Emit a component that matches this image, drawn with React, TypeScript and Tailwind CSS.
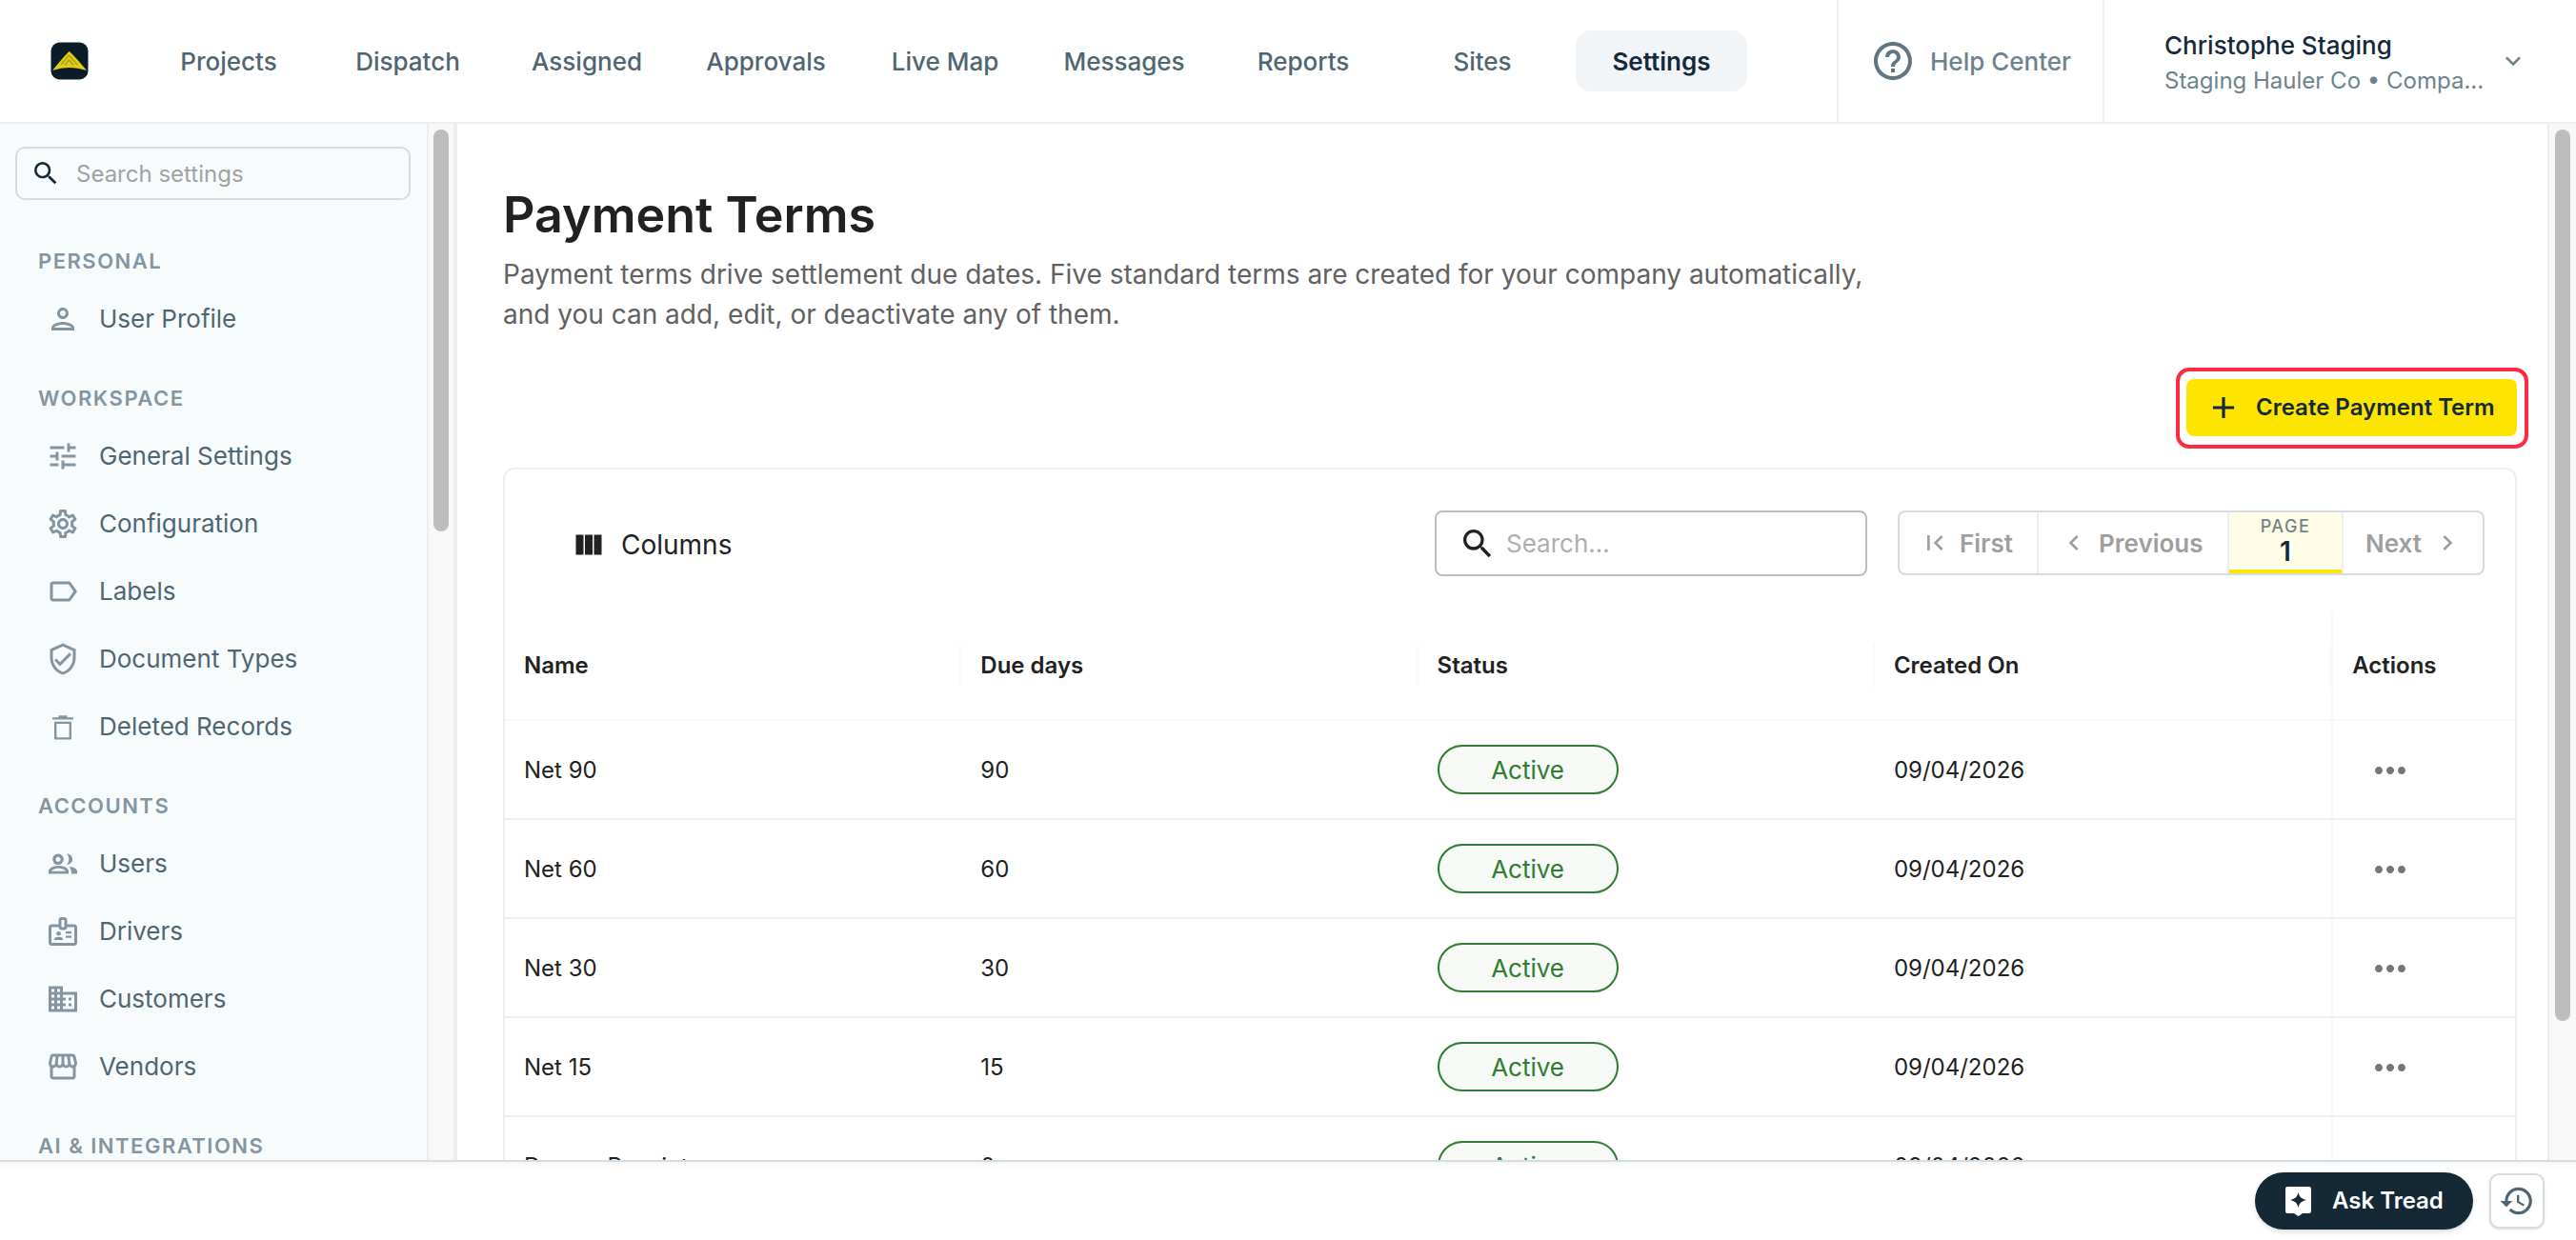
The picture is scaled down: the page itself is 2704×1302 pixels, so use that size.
import React from "react";
import {
  MdSearch, MdOutlinePerson, MdOutlineTune, MdOutlineSettings, MdOutlineLabel, MdOutlineVerifiedUser,
  MdOutlineBadge, MdOutlineDomain, MdOutlineStorefront, MdHelpOutline, MdExpandMore,
  MdAdd, MdViewColumn, MdFirstPage, MdChevronLeft, MdChevronRight, MdMoreHoriz, MdHistory,
} from "react-icons/md";

const nav = ["Projects", "Dispatch", "Assigned", "Approvals", "Live Map", "Messages", "Reports", "Sites", "Settings"];

function TrashIcon({ size, className }: { size: number; className?: string }) {
  return (
    <svg width={size} height={size} viewBox="0 0 24 24" className={className} fill="currentColor">
      <path d="M4.700 5.500h14.600V7H4.700zM9 4.200h6v1.300H9z" />
      <path fillRule="evenodd" d="M6.500 8.500h11a.5.5 0 0 1 .5.5v11.500a.5.5 0 0 1-.5.5h-11a.5.5 0 0 1-.5-.5V9a.5.5 0 0 1 .5-.5zM7.600 10v9.500h8.800V10z" />
    </svg>
  );
}

function UsersIcon({ size, className }: { size: number; className?: string }) {
  return (
    <svg width={size} height={size} viewBox="0 0 36 36" className={className} fill="currentColor">
      <path fillRule="evenodd" d="M13 7.500a5.800 5.800 0 1 1 0 11.600 5.800 5.800 0 0 1 0-11.600zm0 3.300a2.500 2.500 0 1 0 0 5 2.500 2.500 0 0 0 0-5z" />
      <path d="M22 7.600c3.300 0 6 2.400 6 5.700s-2.700 5.700-6 5.700c1.500-1.500 2.300-3.500 2.300-5.700S23.500 9.100 22 7.600z" />
      <path fillRule="evenodd" d="M3 28.500v-2.700c0-3.500 5.200-5.800 10.500-5.800S24 22.300 24 25.800v2.700zm3.200-2.800h14.600c-.6-1.500-3.700-2.900-7.300-2.900s-6.700 1.400-7.300 2.900z" />
      <path d="M25 21c4.300.5 8 2.200 8 5v2.500h-6c0-3-.6-5.500-2-7.500z" />
    </svg>
  );
}

const sections = [
  { title: "PERSONAL", items: [{ label: "User Profile", Icon: MdOutlinePerson as any }] },
  {
    title: "WORKSPACE",
    items: [
      { label: "General Settings", Icon: MdOutlineTune as any },
      { label: "Configuration", Icon: MdOutlineSettings as any },
      { label: "Labels", Icon: MdOutlineLabel as any },
      { label: "Document Types", Icon: MdOutlineVerifiedUser as any },
      { label: "Deleted Records", Icon: TrashIcon as any },
    ],
  },
  {
    title: "ACCOUNTS",
    items: [
      { label: "Users", Icon: UsersIcon as any },
      { label: "Drivers", Icon: MdOutlineBadge as any },
      { label: "Customers", Icon: MdOutlineDomain as any },
      { label: "Vendors", Icon: MdOutlineStorefront as any },
    ],
  },
  { title: "AI & INTEGRATIONS", items: [] as { label: string; Icon: any }[] },
];

const rows = [
  ["Net 90", "90"],
  ["Net 60", "60"],
  ["Net 30", "30"],
  ["Net 15", "15"],
  ["Due on Receipt", "0"],
];

function Logo() {
  return (
    <svg width="40" height="40" viewBox="0 0 40 40" className="shrink-0">
      <rect x="0.5" y="0.5" width="39" height="39" rx="9" fill="#0b1c29" />
      <path d="M19.500 10 Q22 11 38 30 Q28 27 19.500 27 Q11 27 2 30 Q16 13 19.500 10 Z" fill="#e0cd14" />
      <path d="M19.500 14 L28 24 M19.500 14 L11 24 M19.500 19 L24 24.500 M19.500 19 L15 24.500" stroke="#a89a1e" strokeWidth="1.200" fill="none" />
    </svg>
  );
}

function Thumb({ h }: { h: string }) {
  return <div className={`w-4 rounded-full bg-[#bdbdbd] mt-[6px] mx-auto ${h}`} />;
}

export default function App() {
  return (
    <div className="h-[1302px] w-[2704px] overflow-hidden flex flex-col bg-white font-['Inter',sans-serif]">
      {/* Header */}
      <header className="h-[130px] shrink-0 flex items-stretch border-b-2 border-[#eceef1] pl-[53px]">
        <div className="flex items-center">
          <Logo />
        </div>
        <nav className="flex items-center gap-2 ml-[57px]">
          {nav.map((n) => (
            <div
              key={n}
              className={
                n === "Settings"
                  ? "w-[180px] h-16 flex items-center justify-center rounded-2xl bg-[#f1f5f8] text-[26px] font-semibold text-[#15293a]"
                  : "w-[180px] h-16 flex items-center justify-center text-[26px] font-medium text-[#4f6672]"
              }
            >
              {n}
            </div>
          ))}
        </nav>
        <div className="ml-[94px] w-[279px] border-l-2 border-[#eceef1] flex items-center pl-[33px] gap-[15px]">
          <MdHelpOutline size={48} className="text-[#5f7682] shrink-0" />
          <span className="text-[26px] font-medium text-[#6e828d] whitespace-nowrap">Help Center</span>
        </div>
        <div className="flex-1 border-l-2 border-[#eceef1] flex items-center pl-[63px]">
          <div className="w-[338px] pt-[3px]">
            <div className="text-[26px] leading-[38px] font-medium text-[#15293a] whitespace-nowrap">Christophe Staging</div>
            <div className="text-[24px] leading-[36px] text-[#6e828d] whitespace-nowrap">Staging Hauler Co • Compa...</div>
          </div>
          <MdExpandMore size={32} className="text-[#6e828d] ml-[12px]" />
        </div>
      </header>

      {/* Body */}
      <div className="flex-1 min-h-0 flex">
        <aside className="w-[448px] shrink-0 bg-[#f8fbfc] overflow-hidden">
          <div className="mt-6 ml-4 w-[415px] h-14 rounded-[10px] border-2 border-[#d5dce0] flex items-center pl-[14px] gap-4">
            <MdSearch size={32} className="text-[#15293a]" />
            <span className="text-[24px] pt-[2px] text-[#9ea3a6]">Search settings</span>
          </div>
          <div className="mt-12 flex flex-col gap-8">
            {sections.map((s) => (
              <section key={s.title}>
                <div className="h-8 mb-[9px] pl-10 flex items-center text-[22px] font-semibold tracking-[1.5px] text-[#84959f]">{s.title}</div>
                {s.items.map(({ label, Icon }) => (
                  <div key={label} className="h-[71px] flex items-center pl-12 gap-5">
                    <Icon size={36} className="text-[#84959f] shrink-0" />
                    <span className="text-[26px] text-[#4f6672]">{label}</span>
                  </div>
                ))}
              </section>
            ))}
          </div>
        </aside>
        <div className="w-7 shrink-0 border-l-2 border-[#eceef1] bg-[#f8f8f8]">
          <Thumb h="h-[422px]" />
        </div>

        <main className="flex-1 min-w-0 border-l-4 border-[#eceef1] pl-12 pr-8 overflow-hidden">
          <h1 className="mt-[62px] text-[52px] leading-[68px] font-semibold text-[#212121]">Payment Terms</h1>
          <p className="mt-[7px] max-w-[1440px] text-[28px] leading-[42px] text-[#616161]">
            Payment terms drive settlement due dates. Five standard terms are created for your company automatically, and you can add, edit, or deactivate any of them.
          </p>
          <div className="mt-[47px] flex justify-end">
            <button className="relative w-[347px] h-[60px] rounded-lg bg-[#fde500] flex items-center pl-5 gap-[15px] text-[24px] font-semibold text-[#15293a]">
              <MdAdd size={38} className="shrink-0" />
              <span className="whitespace-nowrap">Create Payment Term</span>
              <span className="absolute -left-[11px] -right-[12px] -top-3 -bottom-[13px] rounded-[14px] border-4 border-[#fb2c40]" />
            </button>
          </div>

          <div className="mt-[33px] rounded-t-xl border-2 border-b-0 border-[#eceef1]">
            <div className="h-[150px] pt-[43px] flex items-start">
              <div className="ml-[70px] h-[72px] flex items-center gap-4 text-[28px] text-[#212121]">
                <MdViewColumn size={36} />
                <span>Columns</span>
              </div>
              <div className="ml-auto w-[454px] h-[69px] rounded-lg border-2 border-[#bdbdbd] flex items-center pl-[23px] gap-[10px]">
                <MdSearch size={40} className="text-[#212121]" />
                <span className="text-[26px] text-[#aeaeae]">Search...</span>
              </div>
              <div className="ml-8 mr-[32px] w-[616px] h-[68px] rounded-lg border-2 border-[#d5dce0] flex items-stretch text-[26px] font-semibold text-[#9e9e9e]">
                <div className="w-[146px] border-r-2 border-[#eceef1] flex items-center pl-[21px] gap-[10px]">
                  <MdFirstPage size={32} />
                  <span>First</span>
                </div>
                <div className="w-[200px] border-r-2 border-[#eceef1] flex items-center pl-[21px] gap-[10px]">
                  <MdChevronLeft size={32} />
                  <span>Previous</span>
                </div>
                <div className="w-[118px] bg-[#fffde7] border-b-4 border-[#fde500] flex flex-col items-center">
                  <span className="mt-[3px] text-[18px] leading-[24px] font-medium tracking-[1.5px] text-[#72838c]">PAGE</span>
                  <span className="text-[28px] leading-[28px] font-semibold text-[#15293a]">1</span>
                </div>
                <div className="flex-1 border-l-2 border-[#eceef1] flex items-center pl-[23px] gap-[11px]">
                  <span>Next</span>
                  <MdChevronRight size={32} />
                </div>
              </div>
            </div>

            <div className="grid grid-cols-[479.3px_479.3px_479.3px_479.3px_1fr] h-[114px] border-b-2 border-[#f8f8f8] items-center text-[24px] font-semibold text-[#212121]">
              {["Name", "Due days", "Status", "Created On"].map((h) => (
                <div key={h} className="h-[46px] pl-5 flex items-center border-r-2 border-[#fafafa]">{h}</div>
              ))}
              <div className="h-full pl-5 flex items-center border-l-2 border-[#f8f8f8]">Actions</div>
            </div>

            {rows.map(([name, due]) => (
              <div key={name} className="grid grid-cols-[479.3px_479.3px_479.3px_479.3px_1fr] h-[104px] border-b-2 border-[#eceef1] items-center text-[24px] text-[#212121]">
                <div className="pl-5 pt-[2px] whitespace-nowrap">{name}</div>
                <div className="pl-5 pt-[2px]">{due}</div>
                <div className="pl-5">
                  <span className="w-[190px] h-[52px] rounded-full border-2 border-[#2e7d32] bg-[#f6f9f6] flex items-center justify-center text-[26px] text-[#2e7d32]">Active</span>
                </div>
                <div className="pl-5 pt-[2px]">09/04/2026</div>
                <div className="h-full pl-[36px] pt-[2px] flex items-center border-l-2 border-[#f8f8f8]">
                  <MdMoreHoriz size={48} className="text-[#757575]" />
                </div>
              </div>
            ))}
          </div>
        </main>

        <div className="w-[30px] shrink-0 border-l-2 border-[#eceef1] bg-[#f8f8f8]">
          <Thumb h="h-[936px]" />
        </div>
      </div>

      {/* Bottom bar */}
      <footer className="h-[84px] shrink-0 border-t-2 border-[#d5dce0] bg-white shadow-[inset_0_10px_10px_-10px_rgba(0,0,0,0.08)] flex items-center justify-end gap-[17px] pr-[33px]">
        <button className="w-[229px] h-[60px] rounded-full bg-[#152836] flex items-center pl-8 gap-[22px] shadow-md">
          <svg width="27" height="31" viewBox="0 0 27 31" className="shrink-0">
            <path d="M2 0h23a2 2 0 0 1 2 2v24a2 2 0 0 1-2 2h-7l-4.500 3-4.500-3H2a2 2 0 0 1-2-2V2a2 2 0 0 1 2-2z" fill="#fff" />
            <path d="M13.500 5.500c.8 5 3 7.200 8.500 8.500-5.500 1.300-7.700 3.500-8.500 8.500-.8-5-3-7.200-8.500-8.500 5.500-1.300 7.700-3.500 8.500-8.500z" fill="#152836" />
          </svg>
          <span className="text-[24px] font-semibold text-white whitespace-nowrap">Ask Tread</span>
        </button>
        <button className="w-[58px] h-[58px] rounded-[10px] border-2 border-[#d5dce0] bg-white flex items-center justify-center shadow-sm">
          <MdHistory size={38} className="text-[#4f6672]" />
        </button>
      </footer>
    </div>
  );
}
